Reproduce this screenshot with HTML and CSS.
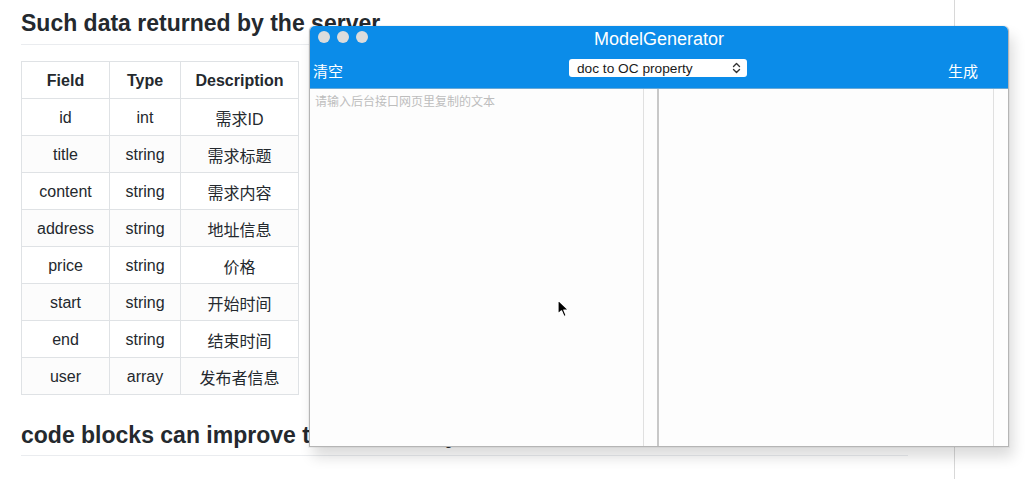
FILE: index.html
```html
<!DOCTYPE html>
<html>
<head>
<meta charset="utf-8">
<link rel="stylesheet" href="styles.css">
</head>
<body>
<div class="page">
  <main class="content">
    <h2 class="heading">Such data returned by the server</h2>
    <table class="fields">
      <thead>
        <tr><th class="c1">Field</th><th class="c2">Type</th><th class="c3">Description</th></tr>
      </thead>
      <tbody>
        <tr><td>id</td><td>int</td><td>需求ID</td></tr>
        <tr><td>title</td><td>string</td><td>需求标题</td></tr>
        <tr><td>content</td><td>string</td><td>需求内容</td></tr>
        <tr><td>address</td><td>string</td><td>地址信息</td></tr>
        <tr><td>price</td><td>string</td><td>价格</td></tr>
        <tr><td>start</td><td>string</td><td>开始时间</td></tr>
        <tr><td>end</td><td>string</td><td>结束时间</td></tr>
        <tr><td>user</td><td>array</td><td>发布者信息</td></tr>
      </tbody>
    </table>
    <h2 class="heading heading2">code blocks can improve the readability</h2>
  </main>
  <aside class="sidebar"></aside>
</div>

<div class="window">
  <div class="titlebar">
    <div class="lights"><span></span><span></span><span></span></div>
    <div class="title">ModelGenerator</div>
  </div>
  <div class="toolbar">
    <span class="tbtn">清空</span>
    <div class="select">
      <span>doc to OC property</span>
      <svg width="9" height="12" viewBox="0 0 9 12"><path d="M1.5 4.5 L4.5 1.5 L7.5 4.5 M1.5 7.5 L4.5 10.5 L7.5 7.5" fill="none" stroke="#333" stroke-width="1.4" stroke-linecap="round" stroke-linejoin="round"/></svg>
    </div>
    <span class="tbtn tbtn-right">生成</span>
  </div>
  <div class="panes">
    <div class="pane left"><span class="placeholder">请输入后台接口网页里复制的文本</span></div>
    <div class="gap"></div>
    <div class="divider"></div>
    <div class="pane right"></div>
    <div class="gap gap-end"></div>
  </div>
</div>

<svg class="cursor" width="14" height="20" viewBox="0 0 14 20"><path d="M1 1 L1 15 L4.5 11.8 L7 17.5 L9.2 16.5 L6.8 11 L11.5 11 Z" fill="#000" stroke="#fff" stroke-width="1.2" stroke-linejoin="round"/></svg>
</body>
</html>
```

FILE: styles.css
```css
html, body {
  margin: 0;
  padding: 0;
  background: #fff;
}
body {
  width: 1033px;
  height: 479px;
  overflow: hidden;
  position: relative;
  font-family: "Liberation Sans", Arial, "Noto Sans CJK SC", sans-serif;
  color: #24292e;
}
.page {
  display: flex;
  height: 479px;
}
.content {
  width: 887px;
  padding-left: 21px;
  padding-top: 2px;
}
.sidebar {
  margin-left: 46px;
  border-left: 1px solid #d8d8d8;
  flex: 1;
}
.heading {
  margin: 0;
  font-size: 23px;
  font-weight: bold;
  line-height: 42px;
  border-bottom: 1px solid #eaecef;
  padding-bottom: 0;
}
.heading2 {
  margin-top: 20px;
  line-height: 40px;
}
.fields {
  border-collapse: collapse;
  margin-top: 16px;
  font-size: 16px;
}
.fields th, .fields td {
  border: 1px solid #dfe2e5;
  height: 35px;
  padding: 1px 13px 0;
  text-align: center;
  color: #24292e;
  background: #fff;
  box-sizing: content-box;
}
.fields th { font-weight: bold; }
.fields .c1 { width: 61px; }
.fields .c2 { width: 44px; }
.fields .c3 { width: 91px; }
.fields tbody tr:nth-child(even) td { background: #fcfcfc; }

.window {
  position: absolute;
  left: 309px;
  top: 26px;
  width: 698px;
  height: 420px;
  border: 1px solid #b5b5b5;
  border-top: none;
  border-radius: 5px 5px 0 0;
  background: #fdfdfd;
  box-shadow: 4px 10px 14px rgba(0,0,0,0.14), 0 0 0 1px rgba(0,0,0,0.04);
  display: flex;
  flex-direction: column;
  font-family: "Liberation Sans", Arial, "Noto Sans CJK SC", sans-serif;
}
.titlebar {
  height: 26px;
  background: #0b8ce9;
  border-radius: 5px 5px 0 0;
  position: relative;
  display: flex;
  align-items: center;
  justify-content: center;
}
.lights {
  position: absolute;
  left: 8px;
  top: 5px;
  display: flex;
  gap: 7px;
}
.lights span {
  width: 12px;
  height: 12px;
  border-radius: 50%;
  background: #dcdcdc;
}
.title {
  color: #fff;
  font-size: 18px;
  padding-top: 1px;
}
.toolbar {
  height: 36px;
  background: #0b8ce9;
  border-bottom: 1px solid #6aa9d6;
  display: flex;
  align-items: center;
  position: relative;
}
.tbtn {
  color: #fff;
  font-size: 15px;
  font-family: "Noto Sans CJK SC", sans-serif;
  margin-left: 3px;
}
.tbtn-right {
  margin-left: auto;
  margin-right: 30px;
}
.select {
  position: absolute;
  left: 259px;
  top: 7px;
  width: 164px;
  height: 18px;
  padding: 0 6px 0 8px;
  background: #fff;
  border-radius: 3px;
  display: flex;
  align-items: center;
  justify-content: space-between;
  font-size: 13.7px;
  color: #1a1a1a;
}
.panes {
  flex: 1;
  display: flex;
}
.pane {
  border-right: 1px solid #e0e0e0;
}
.pane.left { width: 333px; }
.pane.right { width: 334px; }
.placeholder {
  display: block;
  margin: 3px 0 0 5px;
  font-size: 12px;
  color: #bdbdbd;
  font-family: "Noto Sans CJK SC", sans-serif;
}
.gap {
  width: 13px;
}
.gap-end {
  width: 14px;
}
.divider {
  width: 2px;
  background: #c8c8c8;
}
.cursor {
  position: absolute;
  left: 557px;
  top: 299px;
}
```
